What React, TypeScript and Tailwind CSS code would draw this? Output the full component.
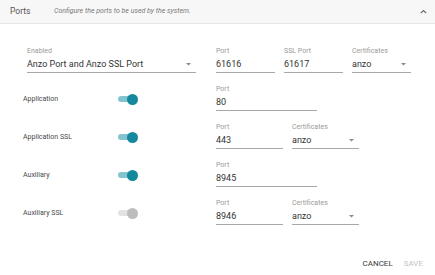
import React from 'react';

const Field = ({ label, value, width, select }: { label: string; value: string; width: string; select?: boolean }) => (
  <div className={`${width} flex flex-col border-b border-[#a8a8a8] pb-[2px]`}>
    <div className="text-[7px] leading-[10px] text-[#9a9a9a]">{label}</div>
    <div className="mt-[2px] flex h-[12px] items-center justify-between text-[9px] leading-[12px] text-[#333]">
      <span>{value}</span>
      {select && (
        <svg width="5" height="3" viewBox="0 0 5 3" className="mr-[5px] mt-[1px]">
          <path d="M0 0 L5 0 L2.5 2.5 Z" fill="#8a8a8a" />
        </svg>
      )}
    </div>
  </div>
);

const Toggle = ({ on }: { on: boolean }) => (
  <div className="relative h-[11px] w-[20px]">
    <div className={`absolute left-0 top-[2.5px] h-[6px] w-[18px] rounded-full ${on ? 'bg-[#84c4cf]' : 'bg-[#e2e2e2]'}`} />
    <div className={`absolute right-0 top-0 h-[11px] w-[11px] rounded-full ${on ? 'bg-[#14889d]' : 'bg-[#bdbdbd]'}`} />
  </div>
);

const ToggleRow = ({ label, on, children }: { label: string; on: boolean; children: React.ReactNode }) => (
  <div className="flex h-[38px] items-start">
    <div className="flex h-[27px] w-[216px] items-center pl-[23px] pt-[3px]">
      <div className="w-[95px] text-[7px] leading-[10px] text-[#4a4a4a]">{label}</div>
      <Toggle on={on} />
    </div>
    <div className="flex items-start gap-[9px]">{children}</div>
  </div>
);

export default function App() {
  return (
    <div className="h-[275px] w-[435px] bg-white" style={{ fontFamily: 'Roboto, sans-serif' }}>
      <div className="flex h-[24px] items-center border-b border-[#e6e6e6] bg-[#f7f7f7] pl-[10px] pr-[8px]">
        <div className="w-[44px] text-[8.5px] text-[#555]">Ports</div>
        <div className="flex-1 text-[7px] italic text-[#777]">Configure the ports to be used by the system.</div>
        <svg width="7" height="5" viewBox="0 0 7 5">
          <path d="M0.8 4.2 L3.5 1.5 L6.2 4.2" fill="none" stroke="#666" strokeWidth="1.1" />
        </svg>
      </div>

      <div className="pt-[22px]">
        <div className="flex h-[38px] items-start">
          <div className="w-[216px] pl-[27px] pr-[20px]">
            <Field label="Enabled" value="Anzo Port and Anzo SSL Port" width="w-full" select />
          </div>
          <div className="flex items-start gap-[9px]">
            <Field label="Port" value="61616" width="w-[59px]" />
            <Field label="SSL Port" value="61617" width="w-[59px]" />
            <Field label="Certificates" value="anzo" width="w-[59px]" select />
          </div>
        </div>

        <ToggleRow label="Application" on>
          <Field label="Port" value="80" width="w-[101px]" />
        </ToggleRow>
        <ToggleRow label="Application SSL" on>
          <Field label="Port" value="443" width="w-[67px]" />
          <Field label="Certificates" value="anzo" width="w-[67px]" select />
        </ToggleRow>
        <ToggleRow label="Auxiliary" on>
          <Field label="Port" value="8945" width="w-[101px]" />
        </ToggleRow>
        <ToggleRow label="Auxiliary SSL" on={false}>
          <Field label="Port" value="8946" width="w-[67px]" />
          <Field label="Certificates" value="anzo" width="w-[67px]" select />
        </ToggleRow>
      </div>

      <div className="mt-[23px] flex justify-end gap-[11px] pr-[12px] text-[8px] leading-[10px]">
        <span className="text-[#3a3a3a]">CANCEL</span>
        <span className="text-[#c4c4c4]">SAVE</span>
      </div>
    </div>
  );
}
